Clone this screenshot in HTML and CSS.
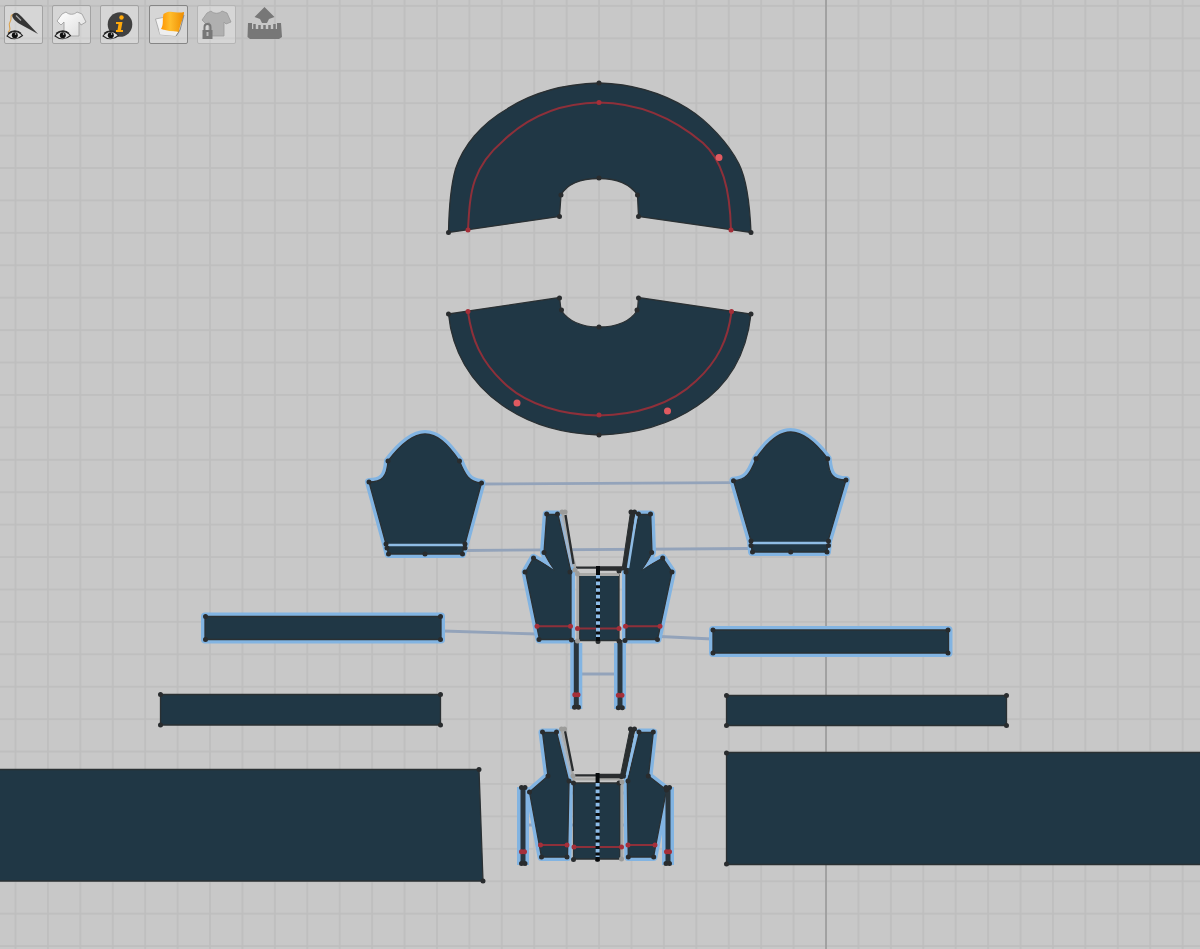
FILE: index.html
```html
<!doctype html>
<html>
	<head>
		<meta charset='utf-8'>
		<title>pattern window</title>
		<link rel="stylesheet" href="styles.css">
	</head>
	<body>
		<svg id='canvas' width='1200' height='949' viewBox='0 0 1200 949'>
			<defs>
				<pattern id='grid' x='15.5' y='5.9' width='32.42' height='32.42' patternUnits='userSpaceOnUse'>
					<path class='grid-line' d='M0 0V32.42M32.42 0V32.42M0 0H32.42M0 32.42H32.42'/>
				</pattern>
			</defs>
			<rect width='1200' height='949' fill='url(#grid)'/>
			<path class='axis' d='M826 0V949'/>

			<!-- symmetry links -->
			<path class='link' d='M482 484L733 482.6M465 550.5L751 548.5M443 631L537 634M660 636.5L712 639M580 674H618'/>
			<path class='link' d='M524 825H533M570 793H573M622 793H627M570 825H573M622 825H627'/>

			<!-- skirt, front and back -->
			<path class='piece' d='M448.5 232.5C449 205 451 185 455.5 169C463 146 481 124 507 109C535 91 565 84 599 83C635 84 662 93 687 108C708 121 729 144 739 164C747 180 750 208 751 232.5L638.5 216.5L637.5 195C630 184 617 178.5 599 178.5C581 178.5 567 184 561 195L559.5 216.5Z'/>
			<path class='inner' d='M468 230C469 210 470 194 475 180C481 163 490 152 503 141C532 113 564 103 599 102.5C636 103 670 115 703 143C722 160 730 188 731 230'/>
			<path class='dot' d='M448.5 232.5h0M751 232.5h0M599 83h0M559.5 216.5h0M638.5 216.5h0M561 195h0M637.5 195h0M599 178h0'/>
			<path class='dot red' d='M468 230h0M599 102.5h0M731 230h0'/>

			<path class='piece' d='M448.5 314L559.5 297.5L561 310C569 322 582 327 599 327C616 327 630 322 637.5 310L638.5 297.5L751 314C747 350 731 384 697 406C669 425 635 434 599 435C563 434 530 425 502 405C470 383 452 350 448.5 314Z'/>
			<path class='inner' d='M468 312C472 340 481 361 503 382C526 405 563 415 599 415.5C635 415 671 405 696 381C718 361 728 339 731.5 312'/>
			<path class='dot' d='M448.5 314h0M751 314h0M559.5 298h0M638.5 298h0M561.5 310h0M637 310h0M599 327h0M599 435h0'/>
			<path class='dot red' d='M468 311.5h0M599 415h0M731.5 311.5h0'/>
			<path class='pin' d='M719 157.5h0M517 403h0M667.5 411h0'/>

			<!-- sleeves -->
			<path class='halo' d='M369 482C382 482 387 477 388 461C401 444 413 434 425 434C437 434 447 443 459.5 461C465 475 469 482 481.5 483L465 544L462 554H388.5L386 544Z'/>
			<path class='piece' d='M369 482C382 482 387 477 388 461C401 444 413 434 425 434C437 434 447 443 459.5 461C465 475 469 482 481.5 483L465 544L462 554H388.5L386 544Z'/>
			<path class='seam' d='M388 545H464'/>
			<path class='dot' d='M369 482h0M388 461h0M459.5 461h0M481.5 483h0M386 544h0M465 544h0M387 548h0M465 548h0M388.5 554h0M462.5 554h0M425 554h0'/>

			<path class='halo' d='M733.5 480.7C746 480 750 474 756 458.7C768 441 779 432 790.7 432C803 432 815 442 827.7 458.7C829 475 833 480 846 480L828 541L827 552H752L751 541Z'/>
			<path class='piece' d='M733.5 480.7C746 480 750 474 756 458.7C768 441 779 432 790.7 432C803 432 815 442 827.7 458.7C829 475 833 480 846 480L828 541L827 552H752L751 541Z'/>
			<path class='seam' d='M752 543H828'/>
			<path class='dot' d='M733.5 480.7h0M756 458.7h0M827.7 458.7h0M846 480h0M751 541h0M828.5 541h0M751 545.5h0M828.5 545.5h0M752.5 552h0M827 552h0M790.7 552h0'/>

			<!-- bands -->
			<path class='halo' d='M205 616.5H441V639.5H205Z'/>
			<path class='piece' d='M205 616.5H441V639.5H205Z'/>
			<path class='dot' d='M205.5 616.5h0M440.5 616.5h0M205.5 639.5h0M440.5 639.5h0'/>
			<path class='halo' d='M713 630H948.5V653H713Z'/>
			<path class='piece' d='M713 630H948.5V653H713Z'/>
			<path class='dot' d='M713 630h0M948 630h0M713 653h0M948 653h0'/>
			<path class='piece' d='M160.5 694.5H440.5V725H160.5Z'/>
			<path class='dot' d='M160.5 694.5h0M440.5 694.5h0M160.5 725h0M440.5 725h0'/>
			<path class='piece' d='M726.5 695.5H1006.5V725.5H726.5Z'/>
			<path class='dot' d='M726.5 695.5h0M1006.5 695.5h0M726.5 725.5h0M1006.5 725.5h0'/>
			<path class='piece' d='M-5 769.5H479L483 881H-5Z'/>
			<path class='dot' d='M479 769.5h0M483 881h0'/>
			<path class='piece' d='M726.5 752.5H1205V864.5H726.5Z'/>
			<path class='dot' d='M726.5 753h0M726.5 864h0'/>

			<!-- front bodice -->
			<path class='halo' d='M546.7 514.5H558L571 572V639.5H539.5L525.5 572L533.5 558L553 569L544 552.5Z'/>
			<path class='halo' d='M650.7 514.5H639L626 572V639.5H657.5L672 572L662.7 558L643 569L652 552.5Z'/>
			<path class='halo wide' d='M576.3 643V709M620 643V709'/>
			<path class='piece' d='M546.7 514.5H558L571 572V639.5H539.5L525.5 572L533.5 558L553 569L544 552.5Z'/>
			<path class='dart' d='M544.5 557L553.5 569.5L536.5 558Z'/>
			<path class='piece' d='M650.7 514.5H639L626 572V639.5H657.5L672 572L662.7 558L643 569L652 552.5Z'/>
			<path class='dart' d='M651.5 557L642.5 569.5L659.5 558Z'/>
			<path class='piece' d='M579.5 575H619V640.5H579.5Z'/>
			<path class='mirror' d='M562.5 512L576 571M577.7 571V641M577 574.5H619'/>
			<path class='mirror light' d='M561 516L572 567'/>
			<path class='edge' d='M565.5 515L573.5 564M576 567.7H598'/>
			<path class='strap' d='M630.5 512H635L627 570H622Z'/>
			<path class='edge wide' d='M598 568.5H622'/>
			<path class='seam' d='M636.3 516L628 568'/>
			<path class='bar' d='M576.3 640V707M620 640V707'/>
			<path class='dot' d='M546.7 514h0M557.5 514h0M544 552.5h0M533.5 558h0M525 572h0M570 572h0M539 639.5h0M571.5 640h0M598 641.5h0M619 641h0M625 640.5h0M657.5 639.5h0M672 572h0M662.7 558h0M651.7 552.5h0M650.5 514h0M638.5 514h0M631 512h0M634.5 512h0M619 571h0M626 572h0'/>
			<path class='dot' d='M574.5 707.3h0M578.5 707.3h0M618.3 707.7h0M622.3 707.7h0'/>
			<path class='dot grey' d='M562 512h0M565 512h0M575 570h0M577.5 574h0M577.5 641h0'/>
			<path class='inner' d='M537 626.3H571M577.5 628.5H619M625 626.3H660'/>
			<path class='dot red' d='M537 626.3h0M570.5 626.3h0M577.5 628.5h0M619 628.5h0M625.5 626.3h0M660 626.3h0M574.8 694.7h0M578 694.7h0M618.3 695.3h0M622 695.3h0'/>
			<path class='zip' d='M598 566V641'/>
			<path class='zip teeth' d='M598 575V637'/>

			<!-- back bodice -->
			<path class='halo' d='M542.5 732.5H556.7L569 782L567.5 857H541.5L529.5 792L548 776Z'/>
			<path class='halo' d='M653.3 732.5H639.3L627.3 782L628.3 857H653.5L666.5 790L648.5 776Z'/>
			<path class='halo wide' d='M523 787V865M668 787V865'/>
			<path class='piece' d='M542.5 732.5H556.7L569 782L567.5 857H541.5L529.5 792L548 776Z'/>
			<path class='piece' d='M653.3 732.5H639.3L627.3 782L628.3 857H653.5L666.5 790L648.5 776Z'/>
			<path class='piece' d='M573.5 783H620V859H573.5Z'/>
			<path class='mirror' d='M561.5 729L573 776M572 779H622M622 782V859'/>
			<path class='mirror light' d='M560 733L571 776'/>
			<path class='edge' d='M565 731L573 771M575 775.3H597.5'/>
			<path class='strap' d='M630 729H635L625 778H620Z'/>
			<path class='edge wide' d='M597.5 776H623'/>
			<path class='seam' d='M636 734L627 775'/>
			<path class='bar' d='M523 787V864M668 787V864'/>
			<path class='dot' d='M542.5 732h0M556.5 732h0M548 776h0M529.5 792h0M569 781h0M567 857h0M541.5 857h0M573.5 783h0M573.5 859.5h0M597.5 859.5h0M619 783h0M628 781h0M628.3 857h0M653.7 857h0M666.5 790h0M648.3 776h0M653.3 732h0M639 732h0M630.5 729h0M634.5 729h0M621.5 776.5h0'/>
			<path class='dot' d='M521.5 787.5h0M525 787.5h0M666 787.5h0M669.5 787.5h0M521.5 863.5h0M525 863.5h0M666 863.5h0M669.5 863.5h0'/>
			<path class='dot grey' d='M561.5 729h0M564.5 729h0M573 776h0M622 782h0M621.5 859h0'/>
			<path class='inner' d='M540.5 845H567M573.5 847H621.5M628 845H655'/>
			<path class='dot red' d='M540.5 845h0M567 845h0M574 847h0M621.5 847h0M628 845h0M655 845h0M521.5 851.7h0M524.5 851.7h0M666.5 851.7h0M669.5 851.7h0'/>
			<path class='zip' d='M597.6 773V861'/>
			<path class='zip teeth' d='M597.6 783V857'/>
		</svg>

		<nav class='toolbar'>
			<div class='tool'>
				<svg viewBox='0 0 39 39'>
					<path d='M4 27C9 24 3 21 6 17C9 13 4 10 11 9' fill='none' stroke='#dca24c' stroke-width='1.1'/>
					<path d='M9 9C12 6 15 9 18 12L34 29L14 18C9 14 7 11 9 9Z' fill='#363636'/>
					<path d='M12 10.5L17 15.5' stroke='#aaa' stroke-width='1.2'/>
					<g id='eye'>
						<path d='M3 31C7 25 14 25 18.500 30.500C14 34.500 8 35 3 31Z' fill='#ddd' stroke='#222' stroke-width='1.1'/>
						<path d='M4 28.500C8 25 14 25 17 28.500' fill='none' stroke='#222' stroke-width='1.2'/>
						<circle cx='10.800' cy='30.300' r='3' fill='#111'/>
						<circle cx='11.600' cy='29' r='.7' fill='#ddd'/>
					</g>
				</svg>
			</div>
			<div class='tool'>
				<svg viewBox='0 0 39 39'>
					<linearGradient id='cloth' x2='1' y2='1'><stop stop-color='#fff'/><stop offset='1' stop-color='#dcdcdc'/></linearGradient>
					<path d='M14 7C17 10 22 10 25 7L30 9L34 17L29 20L27 17V31H12V17L9 20L5 16L10 9Z' fill='url(#cloth)' stroke='#999' stroke-width='.8'/>
					<use href='#eye'/>
				</svg>
			</div>
			<div class='tool'>
				<svg viewBox='0 0 39 39'>
					<circle cx='20' cy='19.5' r='12.3' fill='#404040'/>
					<circle cx='21.500' cy='12.500' r='2.200' fill='#ffa90a'/>
					<path d='M16 17H22.500L21 25H23V27H16V25H17.500L18.500 19H16Z' fill='#ffa90a'/>
					<use href='#eye'/>
				</svg>
			</div>
			<div class='tool on'>
				<svg viewBox='0 0 39 39'>
					<linearGradient id='fold'><stop stop-color='#ff9500'/><stop offset='.4' stop-color='#ffbd2c'/><stop offset='1' stop-color='#ee8c00'/></linearGradient>
					<path d='M6.500 14L14 12.500L30 27L27 31L11 29.500Z' fill='#f4f4f4' stroke='#999' stroke-width='.7'/>
					<path d='M14.500 9C21 4 27 9 35 7C35 14 31 18 30 27C24 25 19 28 12 24C15 19 13 15 14.500 9Z' fill='url(#fold)'/>
					<path d='M10 24C17 25 22 26 28 28L27 31L11 29.500Z' fill='#eee'/>
					<path d='M27 31L31 25L35 10' fill='none' stroke='#777' stroke-width='.8'/>
				</svg>
			</div>
			<div class='tool off'>
				<svg viewBox='0 0 39 39'>
					<path d='M14 6C17 9 22 9 25 6L30 8L34 17L29 19L27 17V31H12V17L9 19L5 15L10 8Z' fill='#b0b0b0' stroke='#999' stroke-width='.8'/>
					<path d='M7.500 26V22C7.500 18 13.500 18 13.500 22V26' fill='none' stroke='#777' stroke-width='2'/>
					<path d='M5.500 25H15.500V34H5.500Z' fill='#777'/>
					<path d='M10.500 27V31' stroke='#bbb' stroke-width='2'/>
				</svg>
			</div>
			<div class='tool bare'>
				<svg viewBox='0 0 39 39'>
					<path d='M19.500 2L29.500 12L24 14L22 18H17L15 14L9.500 12Z' fill='#777'/>
					<path d='M3 18H7V24H32V18H36L37 32L34 34H5L2.500 32Z' fill='#777'/>
					<path d='M9.500 19V25M14.500 20V25M19.500 20V25M24.500 20V25M29.500 19V25' stroke='#777' stroke-width='2.500'/>
				</svg>
			</div>
		</nav>
	</body>
</html>
```
FILE: styles.css
```css
body {
	margin: 0;
	background: #c8c8c8;
	overflow: hidden;
}

#canvas {
	display: block;
}

#canvas path {
	fill: none;
}

/* background */

.grid-line {
	stroke: #bdbdbd;
	stroke-width: 1.6;
}

.axis {
	stroke: #929292;
	stroke-width: 1.3;
}

/* pattern pieces */

#canvas .piece {
	fill: #203745;
	stroke: #2a3033;
	stroke-width: 1.3;
}

#canvas .dart {
	fill: #86b6e3;
}

.halo {
	stroke: #82b4e2;
	stroke-width: 8;
	stroke-linejoin: round;
}

.halo.wide {
	stroke-width: 12;
}

.link {
	stroke: #93a3ba;
	stroke-width: 2.8;
}

.seam {
	stroke: #8ebce5;
	stroke-width: 2.5;
}

.inner {
	stroke: #8e303a;
	stroke-width: 2;
}

.dot {
	stroke: #292c2e;
	stroke-width: 5;
	stroke-linecap: round;
}

.dot.red {
	stroke: #a52f39;
}

.dot.grey {
	stroke: #9c9c9a;
}

.pin {
	stroke: #e05a60;
	stroke-width: 7;
	stroke-linecap: round;
}

.mirror {
	stroke: #a9a9a7;
	stroke-width: 2.8;
}

.mirror.light {
	stroke: #a6b5c7;
	stroke-width: 2;
}

.edge {
	stroke: #2a2d2f;
	stroke-width: 2.3;
}

.edge.wide {
	stroke-width: 4.5;
}

#canvas .strap {
	fill: #292e30;
	stroke: #292e30;
}

.bar {
	stroke: #29353c;
	stroke-width: 5;
}

.zip {
	stroke: #080b0d;
	stroke-width: 4;
}

.zip.teeth {
	stroke: #8cbce8;
	stroke-dasharray: 3.6 3;
}

/* toolbar */

.toolbar {
	position: absolute;
	top: 5px;
	left: 4px;
	display: flex;
	gap: 9.2px;
}

.tool {
	box-sizing: border-box;
	width: 39px;
	height: 39px;
	border: 1px solid #a3a3a3;
	border-radius: 2px;
	background: rgba(255, 255, 255, 25%);
}

.tool svg {
	display: block;
	width: 39px;
	height: 39px;
	margin: -1px;
}

.tool.on {
	border-color: #868686;
}

.tool.off {
	border-color: #b5b5b5;
}

.tool.bare {
	border-color: transparent;
	background: none;
}
```
